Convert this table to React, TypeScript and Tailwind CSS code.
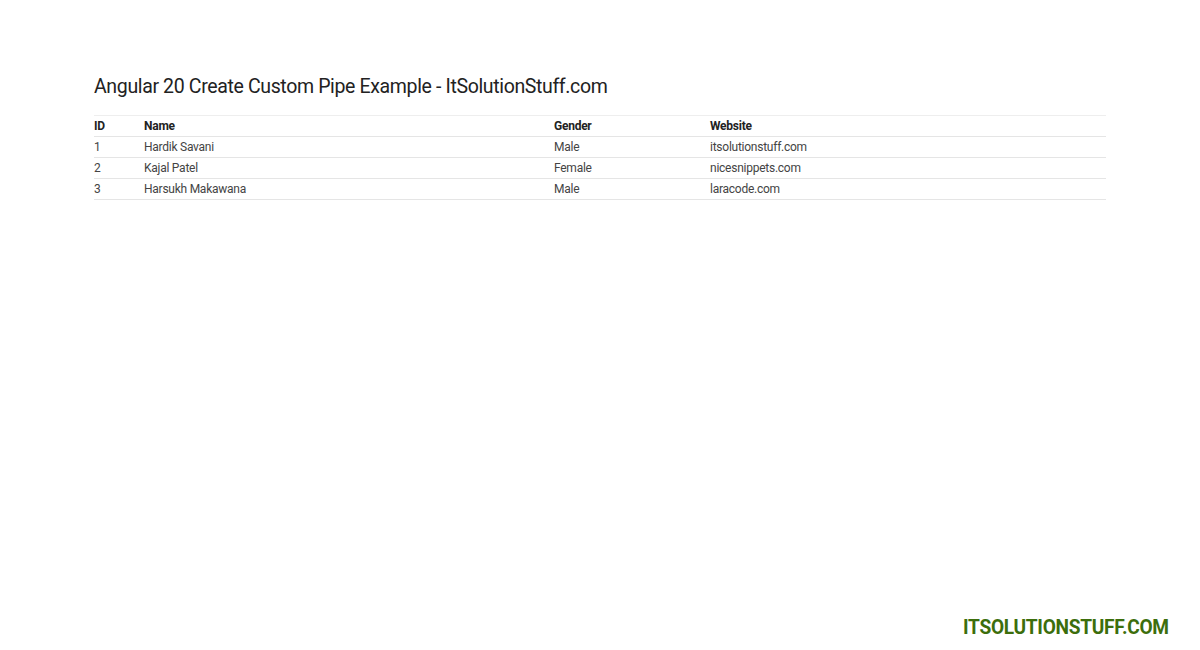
export default function App() {
  const rows = [
    { id: 1, name: "Hardik Savani", gender: "Male", website: "itsolutionstuff.com" },
    { id: 2, name: "Kajal Patel", gender: "Female", website: "nicesnippets.com" },
    { id: 3, name: "Harsukh Makawana", gender: "Male", website: "laracode.com" },
  ];
  return (
    <div className="relative w-[1200px] h-[650px] bg-white overflow-hidden" style={{ fontFamily: "Roboto, sans-serif" }}>
      <div className="pt-[72px] pl-[94px] pr-[94px]">
        <h1 className="text-[21px] leading-[28px] text-[#222] tracking-[-0.4px] font-normal whitespace-nowrap">
          <span className="inline-block origin-left scale-x-[0.93]">
            Angular 20 Create Custom Pipe Example - ItSolutionStuff.com
          </span>
        </h1>
        <table className="mt-[15px] w-full border-collapse text-[12px] text-[#444] tracking-[-0.25px]">
          <thead>
            <tr className="border-t border-[#eee] text-[#222]">
              <th className="text-left font-bold h-[21px] py-0 w-[50px]">ID</th>
              <th className="text-left font-bold py-0 w-[410px]">Name</th>
              <th className="text-left font-bold py-0 w-[156px]">Gender</th>
              <th className="text-left font-bold py-0">Website</th>
            </tr>
          </thead>
          <tbody>
            {rows.map((r) => (
              <tr key={r.id} className="border-t border-b border-[#e5e5e5]">
                <td className="h-[21px] py-0 pb-[1px]">{r.id}</td>
                <td className="py-0 pb-[1px]">{r.name}</td>
                <td className="py-0 pb-[1px]">{r.gender}</td>
                <td className="py-0 pb-[1px]">{r.website}</td>
              </tr>
            ))}
          </tbody>
        </table>
      </div>
      <div className="absolute left-[963px] top-[615px] text-[20px] font-bold text-[#3c6e0c] leading-[24px] tracking-[-0.3px] whitespace-nowrap">
        <span className="inline-block origin-left scale-x-[0.955]">ITSOLUTIONSTUFF.COM</span>
      </div>
    </div>
  );
}
